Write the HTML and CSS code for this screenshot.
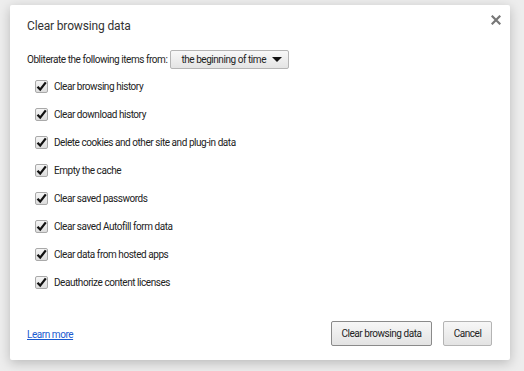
FILE: index.html
```html
<!DOCTYPE html>
<html>
<head>
<meta charset="utf-8">
<link rel="stylesheet" href="styles.css">
</head>
<body>
<div class="dialog">
  <button class="close" aria-label="Close">
    <svg width="10" height="10" viewBox="0 0 10 10"><path d="M1.5 1.5 L8.5 8.5 M8.5 1.5 L1.5 8.5" stroke="#777" stroke-width="2.2" stroke-linecap="square"/></svg>
  </button>
  <h1 class="title">Clear browsing data</h1>
  <div class="range">
    <span class="range-label">Obliterate the following items from:</span>
    <div class="select"><span>the beginning of time</span><span class="arrow"></span></div>
  </div>
  <ul class="items">
    <li class="item"><span class="cb"><svg width="11" height="11" viewBox="0 0 11 11"><path d="M1.5 5.8 L4.2 8.6 L9.8 1.4" fill="none" stroke="#111" stroke-width="2.3"/></svg></span>Clear browsing history</li>
    <li class="item"><span class="cb"><svg width="11" height="11" viewBox="0 0 11 11"><path d="M1.5 5.8 L4.2 8.6 L9.8 1.4" fill="none" stroke="#111" stroke-width="2.3"/></svg></span>Clear download history</li>
    <li class="item"><span class="cb"><svg width="11" height="11" viewBox="0 0 11 11"><path d="M1.5 5.8 L4.2 8.6 L9.8 1.4" fill="none" stroke="#111" stroke-width="2.3"/></svg></span>Delete cookies and other site and plug-in data</li>
    <li class="item"><span class="cb"><svg width="11" height="11" viewBox="0 0 11 11"><path d="M1.5 5.8 L4.2 8.6 L9.8 1.4" fill="none" stroke="#111" stroke-width="2.3"/></svg></span>Empty the cache</li>
    <li class="item"><span class="cb"><svg width="11" height="11" viewBox="0 0 11 11"><path d="M1.5 5.8 L4.2 8.6 L9.8 1.4" fill="none" stroke="#111" stroke-width="2.3"/></svg></span>Clear saved passwords</li>
    <li class="item"><span class="cb"><svg width="11" height="11" viewBox="0 0 11 11"><path d="M1.5 5.8 L4.2 8.6 L9.8 1.4" fill="none" stroke="#111" stroke-width="2.3"/></svg></span>Clear saved Autofill form data</li>
    <li class="item"><span class="cb"><svg width="11" height="11" viewBox="0 0 11 11"><path d="M1.5 5.8 L4.2 8.6 L9.8 1.4" fill="none" stroke="#111" stroke-width="2.3"/></svg></span>Clear data from hosted apps</li>
    <li class="item"><span class="cb"><svg width="11" height="11" viewBox="0 0 11 11"><path d="M1.5 5.8 L4.2 8.6 L9.8 1.4" fill="none" stroke="#111" stroke-width="2.3"/></svg></span>Deauthorize content licenses</li>
  </ul>
  <div class="footer">
    <a class="learn" href="#">Learn more</a>
    <div class="buttons">
      <button class="btn default">Clear browsing data</button>
      <button class="btn cancel">Cancel</button>
    </div>
  </div>
</div>
</body>
</html>
```

FILE: styles.css
```css
html, body {
  margin: 0;
  padding: 0;
}
body {
  background: #ededed;
  width: 524px;
  height: 371px;
  padding: 5px 14px 11px 10px;
  box-sizing: border-box;
  font-family: Roboto, "Noto Sans", sans-serif;
  font-size: 10px;
  letter-spacing: -0.45px;
  color: #222;
}
.dialog {
  position: relative;
  background: #fff;
  height: 355px;
  box-sizing: border-box;
  border-radius: 2px;
  box-shadow: 0 3px 12px rgba(0, 0, 0, 0.22);
  padding: 12px 17px 14px 17px;
  display: flex;
  flex-direction: column;
}
.close {
  position: absolute;
  top: 10px;
  right: 9px;
  width: 10px;
  height: 10px;
  padding: 0;
  border: 0;
  background: none;
  display: flex;
}
.title {
  margin: 0;
  font-size: 12px;
  letter-spacing: -0.15px;
  font-weight: normal;
  line-height: 18px;
  color: #333;
}
.range {
  margin-top: 15px;
  display: flex;
  align-items: center;
  gap: 3px;
  height: 19px;
}
.select {
  height: 19px;
  width: 119px;
  box-sizing: border-box;
  border: 1px solid #b5b5b5;
  border-radius: 2px;
  background: linear-gradient(#f8f8f8, #e4e4e4);
  display: flex;
  align-items: center;
  justify-content: space-between;
  padding: 0 6px 0 10px;
}
.arrow {
  width: 0;
  height: 0;
  border-left: 5px solid transparent;
  border-right: 5px solid transparent;
  border-top: 5px solid #111;
}
.items {
  list-style: none;
  margin: 3px 0 0 0;
  padding: 0 0 0 8px;
}
.item {
  height: 28px;
  display: flex;
  align-items: center;
  gap: 6px;
}
.cb {
  width: 13px;
  height: 13px;
  box-sizing: border-box;
  border: 1px solid #a9a9a9;
  border-radius: 2px;
  background: linear-gradient(#f5f5f5, #dcdcdc);
  display: flex;
  align-items: center;
  justify-content: center;
}
.footer {
  margin-top: auto;
  display: flex;
  align-items: center;
  justify-content: space-between;
  padding-right: 1px;
}
.learn {
  color: #1a5ad0;
  text-decoration: underline;
  position: relative;
  top: 1px;
}
.buttons {
  display: flex;
  gap: 11px;
}
.btn {
  height: 25px;
  padding: 0;
  border: 1px solid #b4b4b4;
  border-radius: 2px;
  background: linear-gradient(#f7f7f7, #e3e3e3);
  font-family: inherit;
  font-size: 10px;
  letter-spacing: -0.45px;
  color: #222;
}
.btn.default {
  width: 101px;
  border-color: #8a8a8a;
}
.btn.cancel {
  width: 49px;
}
```
